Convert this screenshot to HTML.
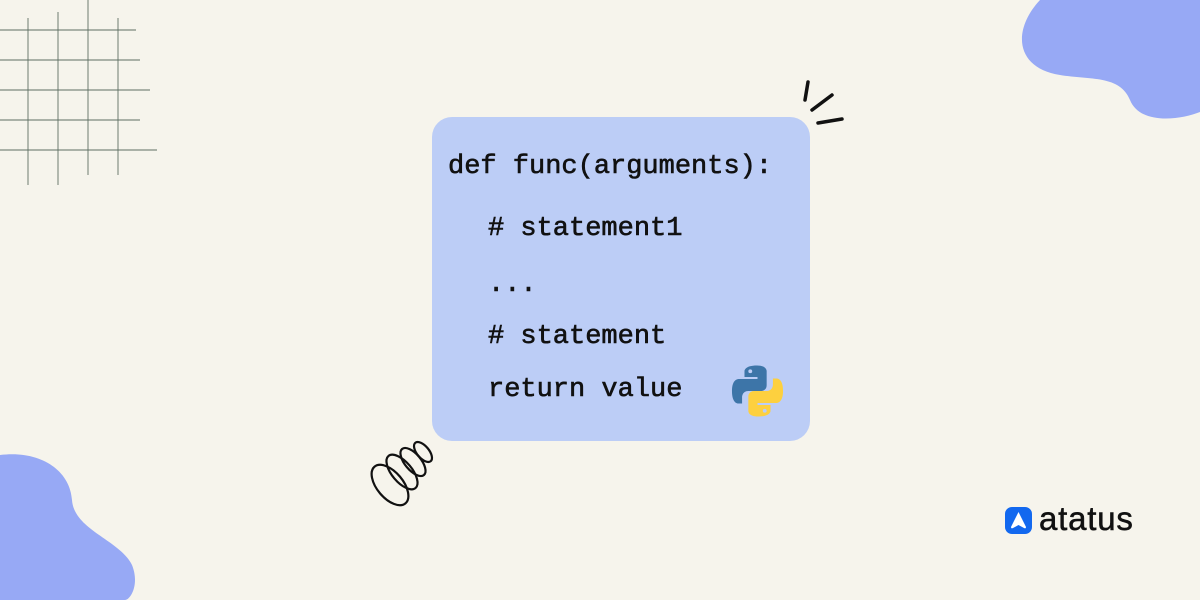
<!DOCTYPE html>
<html><head><style>
body{margin:0;width:1200px;height:600px;background:#f6f4ec;position:relative;overflow:hidden;font-family:"Liberation Mono",monospace}
.card{position:absolute;left:432px;top:117px;width:378px;height:324px;background:#bccdf6;border-radius:20px}
.t{position:absolute;font-size:27px;color:#111;white-space:pre;line-height:1;-webkit-text-stroke:0.6px #111}
</style></head><body>
<svg width="1200" height="600" style="position:absolute;left:0;top:0">
<g stroke="#5f6e62" stroke-width="0.9">
<line x1="28" y1="18" x2="28" y2="185"/><line x1="58" y1="12" x2="58" y2="185"/><line x1="88" y1="0" x2="88" y2="175"/><line x1="118" y1="18" x2="118" y2="175"/>
<line x1="0" y1="30" x2="136" y2="30"/><line x1="0" y1="60" x2="140" y2="60"/><line x1="0" y1="90" x2="150" y2="90"/><line x1="0" y1="120" x2="140" y2="120"/><line x1="0" y1="150" x2="157" y2="150"/>
</g>
<path d="M1040 0 L1200 0 L1200 112 C1180 120 1140 125 1130 100 C1120 75 1090 80 1060 75 C1015 68 1012 30 1040 0Z" fill="#97a9f5"/>
<path d="M0 455 C40 450 70 470 72 500 C74 530 120 540 132 565 C140 585 130 600 125 600 L0 600Z" fill="#97a9f5"/>
<g stroke="#111" stroke-width="3.5" stroke-linecap="round" fill="none">
<path d="M808 82 L805 100"/><path d="M832 95 L812 110"/><path d="M818 123 L842 119"/>
</g>
<g stroke="#111" stroke-width="2.2" stroke-linecap="round" fill="none">
<ellipse cx="390" cy="485" rx="13" ry="24" transform="rotate(-40 390 485)"/>
<ellipse cx="402" cy="472" rx="10" ry="21" transform="rotate(-40 402 472)"/>
<ellipse cx="413" cy="462" rx="8" ry="17" transform="rotate(-40 413 462)"/>
<ellipse cx="423" cy="452" rx="6" ry="12" transform="rotate(-40 423 452)"/>
</g>
</svg>
<div class="card"></div>
<div class="t" style="left:448px;top:154px">def func(arguments):</div>
<div class="t" style="left:488px;top:216px"># statement1</div>
<div class="t" style="left:488px;top:272px">...</div>
<div class="t" style="left:488px;top:324px"># statement</div>
<div class="t" style="left:488px;top:377px">return value</div>
<svg style="position:absolute;left:731px;top:364px" width="53" height="54" viewBox="0 0 110 110">
<path d="M54 2C27 2 28 14 28 14v12h27v4H17S2 28 2 55s13 26 13 26h8V68s0-13 13-13h26s12 0 12-12V15S76 2 54 2z" fill="#3d75a8"/>
<circle cx="40" cy="14" r="4" fill="#bccdf6"/>
<path d="M56 108c27 0 26-12 26-12V84H55v-4h38s15 2 15-25-13-26-13-26h-8v13s0 13-13 13H48s-12 0-12 12v28s-2 13 20 13z" fill="#fdd03f"/>
<circle cx="70" cy="96" r="4" fill="#bccdf6"/>
</svg>
<svg style="position:absolute;left:1005px;top:507px" width="27" height="27" viewBox="0 0 27 27">
<rect width="27" height="27" rx="7" fill="#1268ef"/>
<path d="M13.5 5 L21 20 Q21 22 19 21 L13.5 18 L8 21 Q6 22 6 20Z" fill="#fff"/>
</svg>
<div style="position:absolute;left:1039px;top:500px;font-family:'Liberation Sans',sans-serif;font-size:33px;color:#111;letter-spacing:0.8px;-webkit-text-stroke:0.5px #111">atatus</div>
</body></html>
